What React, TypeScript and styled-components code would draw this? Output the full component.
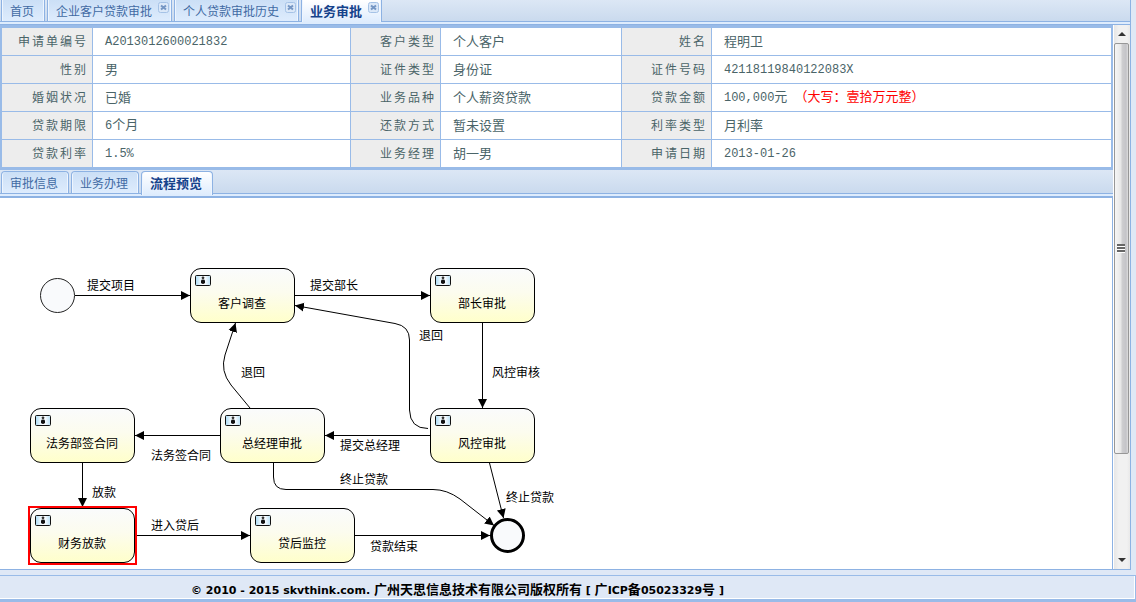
import React from "react";
import styled, { createGlobalStyle, css } from "styled-components";

const sans = `"Liberation Sans", "Noto Sans CJK SC", sans-serif`;
const line = "#8db2e3";
const frame = "#99bbe8";

const Global = createGlobalStyle`
  *, *::before, *::after { box-sizing: border-box; }
  body { margin: 0; background: #dfe8f6; font: 12px/16px ${sans}; color: #000; }
  button { font: inherit; }
`;

const Page = styled.div`
  display: flex;
  flex-direction: column;
  min-height: 100vh;
`;

const Workspace = styled.div`
  display: flex;
  flex-direction: column;
  flex: 1;
  margin-right: 5px;
  border-right: 1px solid ${line};
  border-bottom: 1px solid ${line};
`;

const TabStrip = styled.nav<{ $inner?: boolean }>`
  display: flex;
  align-items: flex-start;
  gap: 2px;
  height: ${(p) => (p.$inner ? 28 : 25)}px;
  padding: ${(p) => (p.$inner ? 1 : 0)}px 1px 0;
  border-bottom: ${(p) => (p.$inner ? 2 : 1)}px solid ${line};
  background: linear-gradient(
    #dce7f5 0,
    #cadaee calc(100% - 3px),
    ${line} calc(100% - 3px),
    ${line} calc(100% - 2px),
    #deecfd calc(100% - 2px)
  );
`;

const Tab = styled.div<{ $active?: boolean; $inner?: boolean }>`
  display: flex;
  align-items: flex-start;
  height: ${(p) => (p.$inner ? 22 : 21)}px;
  border: 1px solid ${line};
  border-bottom: 0;
  border-top-width: ${(p) => (p.$inner ? 1 : 0)}px;
  border-radius: ${(p) => (p.$inner ? "4px 4px 0 0" : "0")};
  background: linear-gradient(#cbdff6, #deecfd);
  box-shadow: inset 1px 0 #eef5fe, inset -1px 0 #eef5fe;
  ${(p) =>
    p.$active &&
    css`
      height: ${p.$inner ? 24 : 22}px;
      background: linear-gradient(#ffffff, #deecfd);
    `}
`;

const TabButton = styled.button<{ $active?: boolean; $closable?: boolean }>`
  padding: 3px ${(p) => (p.$closable ? 6 : 10)}px 0 8px;
  border: 0;
  background: none;
  color: ${(p) => (p.$active ? "#15428b" : "#416aa3")};
  font-size: ${(p) => (p.$active ? 13 : 12)}px;
  font-weight: ${(p) => (p.$active ? 700 : 400)};
  line-height: 18px;
  white-space: nowrap;
  cursor: pointer;
`;

const CloseButton = styled.button`
  display: flex;
  width: 11px;
  height: 11px;
  margin: 2px 2px 0 0;
  padding: 0;
  border: 0;
  background: none;
  cursor: pointer;
`;

const Body = styled.div`
  display: flex;
  flex: 1;
`;

const Content = styled.main`
  display: flex;
  flex-direction: column;
  flex: 1;
  min-width: 0;
`;

const Details = styled.section`
  border: 2px solid ${frame};
  border-width: 3px 2px;
  background: #fff;
`;

const DetailTable = styled.table`
  width: 100%;
  table-layout: fixed;
  border-spacing: 0;
  color: #4a6468;

  tr:last-child > * { height: 27px; border-bottom: 0; }
  tr > *:last-child { border-right: 0; }
`;

const LabelCol = styled.col<{ $first?: boolean }>`
  width: ${(p) => (p.$first ? 91 : 90)}px;
`;

const ValueCol = styled.col<{ $share?: string }>`
  width: ${(p) => p.$share ?? "auto"};
`;

const LabelCell = styled.th`
  height: 28px;
  padding: 0 4px 0 0;
  border-right: 1px solid ${frame};
  border-bottom: 1px solid ${frame};
  background: #ededed;
  font-weight: 400;
  font-size: 12px;
  letter-spacing: 2px;
  line-height: 16px;
  text-align: right;
  white-space: nowrap;
`;

const ValueCell = styled.td`
  height: 28px;
  padding: 0 0 0 12px;
  border-right: 1px solid ${frame};
  border-bottom: 1px solid ${frame};
  font-size: 13px;
  line-height: 16px;
  white-space: nowrap;
`;

const Digits = styled.span`
  font-family: "Liberation Mono", monospace;
  font-size: 12px;
`;

const InWords = styled.strong`
  margin-left: 7px;
  color: #f00;
  font-weight: 400;
`;

const Canvas = styled.section`
  position: relative;
  flex: 1;
  min-height: 370px;
  border-right: 1px solid ${line};
  background: #fff;
  overflow: hidden;
`;

const Edges = styled.svg`
  position: absolute;
  inset: 0;
`;

const NodeBox = styled.div<{ $x: number; $y: number }>`
  position: absolute;
  left: ${(p) => p.$x}px;
  top: ${(p) => p.$y}px;
  width: 105px;
  height: 55px;
  padding: 6px 5px 0 4px;
  border: 1px solid #000;
  border-radius: 11px;
  background: linear-gradient(#fafbfc 0, #fcfcee 45%, #ffffcb 100%);
`;

const NodeIcon = styled.svg`
  display: block;
`;

const NodeName = styled.div`
  margin-top: 10px;
  text-align: center;
  line-height: 16px;
`;

const Current = styled.div<{ $x: number; $y: number }>`
  position: absolute;
  left: ${(p) => p.$x - 2}px;
  top: ${(p) => p.$y - 2}px;
  width: 109px;
  height: 59px;
  border: 2px solid #f00;
`;

const EdgeLabel = styled.span<{ $x: number; $y: number }>`
  position: absolute;
  left: ${(p) => p.$x}px;
  top: ${(p) => p.$y}px;
  line-height: 16px;
  white-space: nowrap;
`;

const Scrollbar = styled.aside`
  display: flex;
  flex-direction: column;
  width: 17px;
  border-left: 1px solid #fff;
  background: linear-gradient(90deg, #e6e6e6, #f1f1f1 30%, #f1f1f1 80%, #e9e9e9);
`;

const ScrollButton = styled.button`
  display: grid;
  place-items: center;
  height: 18px;
  padding: 0;
  border: 0;
  background: none;
`;

const Track = styled.div`
  display: flex;
  flex-direction: column;
  flex: 1;
`;

const Thumb = styled.div`
  display: grid;
  place-items: center;
  flex: 0 0 81%;
  margin-right: 1px;
  padding-right: 1px;
  border: 1px solid #979797;
  border-radius: 2px;
  background: linear-gradient(90deg, #f6f6f6, #e6e6e6 48%, #cfcfd1 52%, #c4c4c8 85%, #dedede);
`;

const Footer = styled.footer`
  margin-top: 5px;
  padding: 5px 220px 0 0;
  border: solid ${frame};
  border-width: 1px 1px 3px 0;
  box-shadow: inset -1px -1px #fff;
`;

const Copyright = styled.p`
  margin: 0;
  font: 700 13px/17px "DejaVu Sans", "Noto Sans CJK SC", sans-serif;
  text-align: center;
  white-space: nowrap;
`;

const Latin = styled.span`
  font-size: 11px;
  white-space: pre;
`;

type TabItem = { title: string; closable?: boolean; active?: boolean };

const pageTabs: TabItem[] = [
  { title: "首页" },
  { title: "企业客户贷款审批", closable: true },
  { title: "个人贷款审批历史", closable: true },
  { title: "业务审批", closable: true, active: true },
];

const innerTabs: TabItem[] = [
  { title: "审批信息" },
  { title: "业务办理" },
  { title: "流程预览", active: true },
];

const rows: [string, React.ReactNode][][] = [
  [["申请单编号", <Digits>A2013012600021832</Digits>], ["客户类型", "个人客户"], ["姓名", "程明卫"]],
  [["性别", "男"], ["证件类型", "身份证"], ["证件号码", <Digits>42118119840122083X</Digits>]],
  [
    ["婚姻状况", "已婚"],
    ["业务品种", "个人薪资贷款"],
    ["贷款金额", <><Digits>100,000</Digits>元<InWords>（大写：壹拾万元整）</InWords></>],
  ],
  [["贷款期限", <><Digits>6</Digits>个月</>], ["还款方式", "暂未设置"], ["利率类型", "月利率"]],
  [["贷款利率", <Digits>1.5%</Digits>], ["业务经理", "胡一男"], ["申请日期", <Digits>2013-01-26</Digits>]],
];

const nodes = [
  { name: "客户调查", x: 190, y: 70 },
  { name: "部长审批", x: 430, y: 70 },
  { name: "法务部签合同", x: 30, y: 210 },
  { name: "总经理审批", x: 220, y: 210 },
  { name: "风控审批", x: 430, y: 210 },
  { name: "财务放款", x: 30, y: 310, current: true },
  { name: "贷后监控", x: 250, y: 310 },
];

const edges = [
  { d: "M75 97.5H190", label: "提交项目", x: 87, y: 80 },
  { d: "M295 97.5H430", label: "提交部长", x: 310, y: 80 },
  { d: "M482.5 125V210", label: "风控审核", x: 492, y: 167 },
  { d: "M428 230.5Q410 230.5 409.5 212V142Q409.5 128 395 125.5L295 107.5", label: "退回", x: 419, y: 130 },
  { d: "M250 210L231 187Q220 173 225 157L235.5 125", label: "退回", x: 241, y: 167 },
  { d: "M430 237.5H325", label: "提交总经理", x: 340, y: 240 },
  { d: "M220 237.5H135", label: "法务签合同", x: 151, y: 250 },
  { d: "M82.5 265V309", label: "放款", x: 92, y: 287 },
  { d: "M137 337.5H250", label: "进入贷后", x: 151, y: 320 },
  { d: "M273.5 265V279Q273.5 291.5 286 291.5H433Q447 291.5 460 301L494 327.5", label: "终止贷款", x: 340, y: 274 },
  { d: "M489.5 265L503.5 320", label: "终止贷款", x: 506, y: 292 },
  { d: "M355 337.5H490", label: "贷款结束", x: 370, y: 341 },
];

function Tabs({ items, inner, label }: { items: TabItem[]; inner?: boolean; label: string }) {
  return (
    <TabStrip $inner={inner} aria-label={label}>
      {items.map((t) => (
        <Tab key={t.title} $active={t.active} $inner={inner}>
          <TabButton type="button" $active={t.active} $closable={t.closable}>
            {t.title}
          </TabButton>
          {t.closable && (
            <CloseButton type="button" aria-label={`关闭${t.title}`}>
              <svg width="11" height="11" viewBox="0 0 11 11">
                <rect x=".5" y=".5" width="10" height="10" rx="2" fill="#dbe8f8" stroke="#a5c2e6" />
                <path d="M3 3.5L8 7.5M8 3.5L3 7.5" stroke="#7596c4" strokeWidth="2" />
              </svg>
            </CloseButton>
          )}
        </Tab>
      ))}
    </TabStrip>
  );
}

function FlowNode({ name, x, y }: { name: string; x: number; y: number }) {
  return (
    <NodeBox $x={x} $y={y}>
      <NodeIcon width="16" height="11" viewBox="0 0 16 11" aria-hidden="true">
        <defs>
          <linearGradient id="card">
            <stop offset="0" stopColor="#a9daf4" />
            <stop offset=".45" stopColor="#fff" />
            <stop offset=".6" stopColor="#fff" />
            <stop offset="1" stopColor="#b8e0f6" />
          </linearGradient>
        </defs>
        <rect x=".5" y=".5" width="15" height="10" rx="1" fill="url(#card)" stroke="#111" />
        <circle cx="8" cy="2.8" r="1.4" fill="#333" />
        <path d="M6 6Q6 4.6 8 4.6T10 6V7.3Q10 9 8 9T6 7.3Z" fill="#111" />
      </NodeIcon>
      <NodeName>{name}</NodeName>
    </NodeBox>
  );
}

function FlowChart() {
  return (
    <Canvas aria-label="流程预览">
      <Edges width="600" height="371" viewBox="0 0 600 371" aria-hidden="true">
        <defs>
          <marker id="arrow" markerUnits="userSpaceOnUse" markerWidth="10" markerHeight="10" refX="9" refY="5" orient="auto">
            <path d="M0 .5L9 5L0 9.5Z" />
          </marker>
        </defs>
        <circle cx="57.5" cy="97.5" r="17" fill="#f9fafc" stroke="#222" />
        <circle cx="507.5" cy="337.5" r="16" fill="#f9fafc" stroke="#000" strokeWidth="3" />
        {edges.map((e) => (
          <path key={e.d} d={e.d} fill="none" stroke="#000" markerEnd="url(#arrow)" />
        ))}
      </Edges>
      {nodes.map((n) => (
        <FlowNode key={n.name} name={n.name} x={n.x} y={n.y} />
      ))}
      {nodes.filter((n) => n.current).map((n) => (
        <Current key={n.name} $x={n.x} $y={n.y} />
      ))}
      {edges.map((e) => (
        <EdgeLabel key={e.d} $x={e.x} $y={e.y}>{e.label}</EdgeLabel>
      ))}
    </Canvas>
  );
}

export default function App() {
  return (
    <Page>
      <Global />
      <Workspace>
        <Tabs items={pageTabs} label="页面" />
        <Body>
          <Content>
            <Details>
              <DetailTable>
                <colgroup>
                  <LabelCol $first />
                  <ValueCol $share="23.26%" />
                  <LabelCol />
                  <ValueCol $share="16.32%" />
                  <LabelCol />
                  <ValueCol />
                </colgroup>
                <tbody>
                  {rows.map((row) => (
                    <tr key={row[0][0]}>
                      {row.map(([label, value]) => (
                        <React.Fragment key={label}>
                          <LabelCell scope="row">{label}</LabelCell>
                          <ValueCell>{value}</ValueCell>
                        </React.Fragment>
                      ))}
                    </tr>
                  ))}
                </tbody>
              </DetailTable>
            </Details>
            <Tabs items={innerTabs} inner label="业务" />
            <FlowChart />
          </Content>
          <Scrollbar>
            <ScrollButton type="button" aria-label="向上滚动">
              <svg width="8" height="4" viewBox="0 0 8 4"><path d="M0 4L4 0L8 4Z" fill="#333" /></svg>
            </ScrollButton>
            <Track>
              <Thumb>
                <svg width="8" height="9" viewBox="0 0 8 9">
                  <path d="M0 1H8M0 4H8M0 7H8" stroke="#666" strokeWidth="2" />
                  <path d="M0 2.5H8M0 5.5H8M0 8.5H8" stroke="#fff" />
                </svg>
              </Thumb>
            </Track>
            <ScrollButton type="button" aria-label="向下滚动">
              <svg width="8" height="4" viewBox="0 0 8 4"><path d="M0 0L4 4L8 0Z" fill="#333" /></svg>
            </ScrollButton>
          </Scrollbar>
        </Body>
      </Workspace>
      <Footer>
        <Copyright>
          <Latin>© 2010 - 2015 skvthink.com. </Latin>广州天思信息技术有限公司版权所有<Latin> [ </Latin>广<Latin>ICP</Latin>备<Latin>05023329</Latin>号<Latin> ]</Latin>
        </Copyright>
      </Footer>
    </Page>
  );
}
